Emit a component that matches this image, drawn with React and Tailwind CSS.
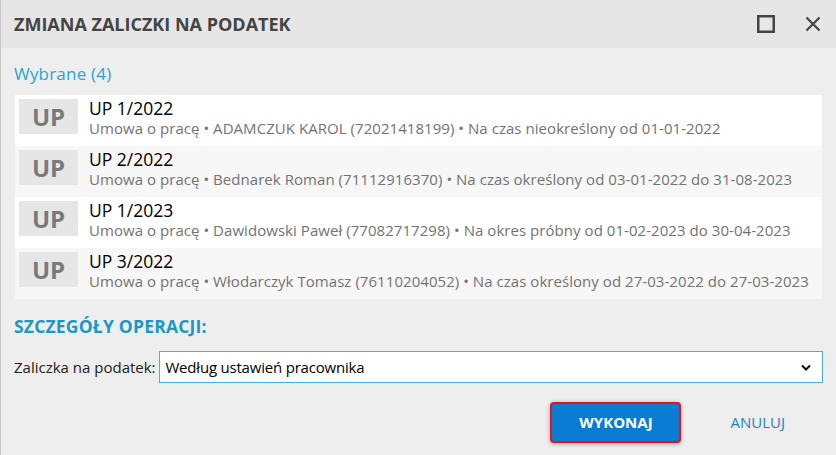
import React from "react";

const rows = [
  { t: "UP 1/2022", d: "Umowa o pracę • ADAMCZUK KAROL (72021418199) • Na czas nieokreślony od 01-01-2022" },
  { t: "UP 2/2022", d: "Umowa o pracę • Bednarek Roman (71112916370) • Na czas określony od 03-01-2022 do 31-08-2023" },
  { t: "UP 1/2023", d: "Umowa o pracę • Dawidowski Paweł (77082717298) • Na okres próbny od 01-02-2023 do 30-04-2023" },
  { t: "UP 3/2022", d: "Umowa o pracę • Włodarczyk Tomasz (76110204052) • Na czas określony od 27-03-2022 do 27-03-2023" },
];

export default function App() {
  return (
    <div className="w-[836px] h-[455px] overflow-hidden bg-[#eeeeee] border-l border-[#c8c8c8] flex flex-col" style={{ fontFamily: '"Open Sans", "Noto Sans", sans-serif' }}>
      <div className="h-[48px] shrink-0 bg-[#e6e6e6] flex items-center pl-[13px] pr-[15px]">
        <div className="text-[18px] font-bold text-[#444444]" style={{ fontFamily: '"Liberation Sans Narrow", "Open Sans", sans-serif' }}>ZMIANA ZALICZKI NA PODATEK</div>
        <div className="ml-auto flex items-center gap-[30px]">
          <svg width="18" height="18" viewBox="0 0 18 18"><rect x="1.25" y="1.25" width="15.5" height="15.5" fill="none" stroke="#444" strokeWidth="2.5" /></svg>
          <svg width="16" height="16" viewBox="0 0 16 16"><path d="M1.5 1.5 L14.5 14.5 M14.5 1.5 L1.5 14.5" stroke="#444" strokeWidth="2.2" /></svg>
        </div>
      </div>
      <div className="pl-[13px] pr-[13px] pt-[14px]">
        <div className="text-[17px] tracking-[0.2px] leading-[24px] text-[#2ca3d3]">Wybrane (4)</div>
        <div className="mt-[9px] ml-[1px] w-[807px] bg-white flex flex-col">
          {rows.map((r, i) => (
            <div key={i} className={`h-[51px] flex items-start pl-[4px] pt-[3px] ${i % 2 ? "bg-[#f7f7f7]" : "bg-white"}`}>
              <div className="mt-[1px] w-[59px] h-[35px] bg-[#e6e6e6] flex items-center justify-center text-[24px] font-bold text-[#7a7a7a]">UP</div>
              <div className="ml-[11px] flex flex-col">
                <div className="text-[17.5px] leading-[20px] text-black">{r.t}</div>
                <div className="text-[15px] tracking-[0.05px] leading-[20px] text-[#737373]">{r.d}</div>
              </div>
            </div>
          ))}
        </div>
        <div className="mt-[16px] text-[17.5px] tracking-[0.2px] font-bold text-[#1a98c6] leading-[22px]">SZCZEGÓŁY OPERACJI:</div>
        <div className="mt-[14px] flex items-center">
          <div className="text-[15px] text-[#222] w-[146px]">Zaliczka na podatek:</div>
          <div className="w-[666px] h-[32px] border border-[#3fb3ea] bg-white flex items-center pl-[5px] pr-[11px]">
            <span className="text-[15px] tracking-[-0.2px] text-black">Według ustawień pracownika</span>
            <svg className="ml-auto" width="10" height="7" viewBox="0 0 10 7"><path d="M1 1.5 L5 5.5 L9 1.5" fill="none" stroke="#111" strokeWidth="2" /></svg>
          </div>
        </div>
        <div className="mt-[19px] flex items-center justify-end pr-[38px]">
          <button className="w-[131px] h-[41px] rounded-[4px] border-2 border-[#e2141e] bg-[#0a7dd2] text-white text-[15px] font-bold shadow-[0_1px_4px_rgba(0,0,0,0.35)]">WYKONAJ</button>
          <div className="ml-[49px] text-[15px] text-[#2a7fbf]">ANULUJ</div>
        </div>
      </div>
    </div>
  );
}
